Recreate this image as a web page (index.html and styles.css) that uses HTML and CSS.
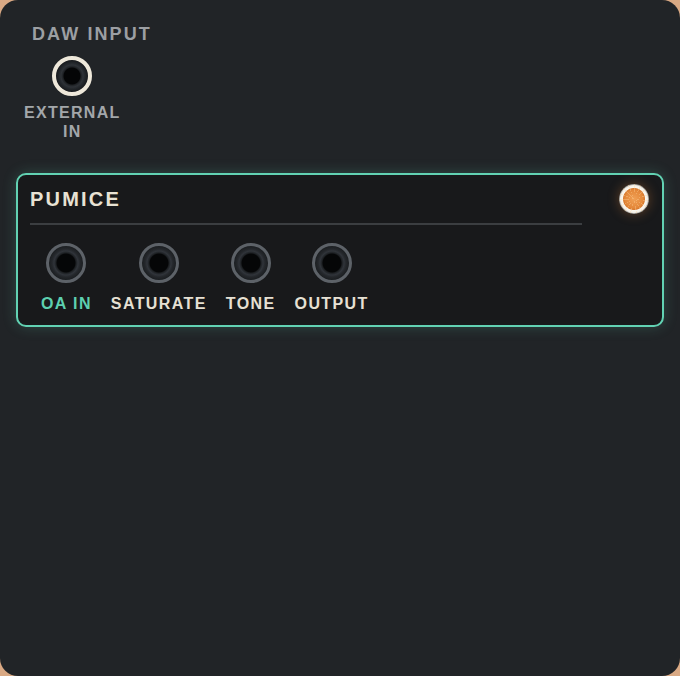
FILE: index.html
```html
<!DOCTYPE html>
<html lang="en">
<head>
  <meta charset="UTF-8" />
  <meta name="viewport" content="width=device-width, initial-scale=1.0" />
  <title>Rack</title>
  <link rel="stylesheet" href="styles.css">
</head>
<body>
  <div class="rack">
    <!-- DAW input section -->
    <section class="daw">
      <h2 class="daw-title">DAW INPUT</h2>
      <div class="port">
        <div class="jack jack-ext"></div>
        <span class="port-label">EXTERNAL<br>IN</span>
      </div>
    </section>

    <!-- Module card -->
    <section class="module">
      <div class="module-head">
        <div class="module-name">
          <h3 class="module-title">PUMICE</h3>
          <div class="divider"></div>
        </div>
        <div class="led"></div>
      </div>
      <div class="jacks">
        <div class="socket">
          <div class="jack"></div>
          <span class="socket-label active">OA IN</span>
        </div>
        <div class="socket">
          <div class="jack"></div>
          <span class="socket-label">SATURATE</span>
        </div>
        <div class="socket">
          <div class="jack"></div>
          <span class="socket-label">TONE</span>
        </div>
        <div class="socket">
          <div class="jack"></div>
          <span class="socket-label">OUTPUT</span>
        </div>
      </div>
    </section>
  </div>
</body>
</html>
```

FILE: styles.css
```css
* {
  margin: 0;
  padding: 0;
  box-sizing: border-box;
}

body {
  background: #d9a984;
  font-family: "Liberation Sans", Arial, sans-serif;
}

.rack {
  height: 676px;
  background: #212427;
  border-radius: 18px;
  padding-top: 24px;
}

/* DAW input */
.daw {
  padding-left: 24px;
}

.daw-title {
  padding-left: 8px;
  font-size: 18px;
  line-height: 20px;
  font-weight: bold;
  letter-spacing: 2.1px;
  color: #9c9fa3;
}

.port {
  display: inline-flex;
  flex-direction: column;
  align-items: center;
  margin-top: 12px;
}

.port-label {
  margin-top: 7px;
  font-size: 16px;
  line-height: 19px;
  font-weight: bold;
  letter-spacing: 1.3px;
  text-align: center;
  color: #a3a7aa;
}

/* jacks */
.jack {
  width: 40px;
  height: 40px;
  border-radius: 50%;
  border: 3px solid #5d6268;
  background: radial-gradient(circle, #050607 0 9px, #1c1f22 10px, #30343a 12px, #24272b 14px, #1b1e21 17px);
}

.jack-ext {
  border: 4px solid #eee8da;
  background: radial-gradient(circle, #040506 0 8px, #1d2023 9px, #2e3237 11px, #23272b 13px, #17191c 16px);
}

/* module card */
.module {
  margin: 32px 16px 0;
  border: 2px solid #62d2b3;
  border-radius: 10px;
  background: #18191b;
  box-shadow: 0 0 14px rgba(98, 210, 179, 0.22);
  padding: 12px 13px 12px 12px;
}

.module-head {
  display: flex;
  align-items: flex-start;
}

.module-name {
  width: 552px;
}

.module-title {
  font-size: 20px;
  line-height: 24px;
  font-weight: bold;
  letter-spacing: 2.2px;
  color: #e8e2d4;
}

.divider {
  margin-top: 12px;
  height: 2px;
  background: #3b3e41;
}

.led {
  margin-left: auto;
  margin-top: -3px;
  width: 30px;
  height: 30px;
  border-radius: 50%;
  background:
    repeating-conic-gradient(rgba(255, 214, 160, 0.35) 0 4deg, transparent 4deg 24deg),
    radial-gradient(circle, #f0a055 0, #e4883a 9px, #d97a2e 10.5px, #fbf7ef 11.5px, #f4efe6 13.5px, rgba(244, 239, 230, 0.5) 15px);
  box-shadow: 0 0 12px rgba(232, 136, 58, 0.35);
}

.jacks {
  display: flex;
  gap: 19px;
  padding-left: 11px;
  margin-top: 18px;
}

.socket {
  display: flex;
  flex-direction: column;
  align-items: center;
}

.socket-label {
  margin-top: 11px;
  font-size: 16px;
  line-height: 19px;
  font-weight: bold;
  letter-spacing: 1.4px;
  color: #e6e0d3;
}

.socket-label.active {
  color: #5dd0b0;
}
```
